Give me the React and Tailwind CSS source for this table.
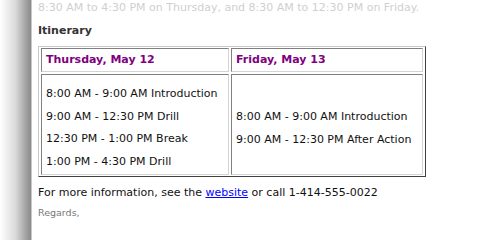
import React from 'react'

const font = { fontFamily: '"DejaVu Sans", Verdana, sans-serif' }

function Cell({ children, className = '' }) {
  return (
    <div
      className={
        'border border-t-[#808080] border-l-[#808080] border-r-[#d4d4d4] border-b-[#d4d4d4] bg-white ' +
        className
      }
    >
      {children}
    </div>
  )
}

function App() {
  const thursday = [
    '8:00 AM - 9:00 AM Introduction',
    '9:00 AM - 12:30 PM Drill',
    '12:30 PM - 1:00 PM Break',
    '1:00 PM - 4:30 PM Drill',
  ]
  const friday = ['8:00 AM - 9:00 AM Introduction', '9:00 AM - 12:30 PM After Action']

  return (
    <div className="flex w-[480px] h-[240px] bg-white overflow-hidden" style={font}>
      <div className="w-[31px] shrink-0 bg-gradient-to-r from-white via-[#dadada] to-[#8a8a8a]" />
      <div className="w-[1px] shrink-0 bg-[#c8c8c8]" />
      <div className="flex-1 bg-white pl-[6px] pt-[1px] text-[11px] text-[#111]">
        <div className="text-[#cfcfcf] leading-[14px] whitespace-nowrap">
          8:30 AM to 4:30 PM on Thursday, and 8:30 AM to 12:30 PM on Friday.
        </div>
        <div className="mt-[9px] font-bold text-[#333] leading-[14px]">Itinerary</div>

        <div className="mt-[8px] w-[388px] border border-t-[#c8c8c8] border-l-[#c8c8c8] border-r-[#404040] border-b-[#404040] pt-[1px] px-[2px] pb-[1px] grid grid-cols-[188px_1fr] grid-rows-[24px_101px] gap-[2px]">
          <Cell className="pl-[4px] flex items-center">
            <span className="font-bold text-[#800080]">Thursday, May 12</span>
          </Cell>
          <Cell className="pl-[4px] flex items-center">
            <span className="font-bold text-[#800080]">Friday, May 13</span>
          </Cell>
          <Cell className="pl-[4px] pt-[8px]">
            {thursday.map((t) => (
              <div key={t} className="leading-[22.7px] whitespace-nowrap">{t}</div>
            ))}
          </Cell>
          <Cell className="pl-[4px] pt-[31px]">
            {friday.map((t) => (
              <div key={t} className="leading-[22.7px] whitespace-nowrap">{t}</div>
            ))}
          </Cell>
        </div>

        <div className="mt-[9px] leading-[14px] whitespace-nowrap">
          For more information, see the{' '}
          <a href="#" className="text-[#0000ff] underline">website</a> or call 1-414-555-0022
        </div>
        <div className="mt-[7px] text-[9.5px] text-[#777] leading-[12px]">Regards,</div>
      </div>
    </div>
  )
}

export default App
